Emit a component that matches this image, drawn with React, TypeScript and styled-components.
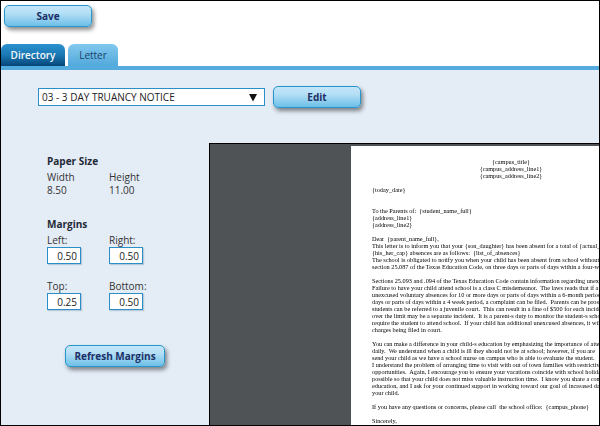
import React from 'react';
import styled, { createGlobalStyle } from 'styled-components';

const GlobalStyle = createGlobalStyle`
  html, body {
    margin: 0;
    padding: 0;
    overflow: hidden;
    background: #ffffff;
  }
  * {
    box-sizing: border-box;
  }
`;

const Frame = styled.div`
  display: flex;
  flex-direction: column;
  width: 600px;
  height: 426px;
  border: 1px solid #000000;
  font-family: 'Open Sans', sans-serif;
  font-size: 10px;
  color: #2b2b2b;
  overflow: hidden;
`;

const TopBar = styled.div`
  padding: 4px 0 17px 3px;
`;

const Button = styled.button<{ $width: number }>`
  display: block;
  width: ${(p) => p.$width}px;
  height: 22px;
  padding: 0;
  border: 1px solid #2696cd;
  border-radius: 5px;
  background: linear-gradient(#c3e5f8, #b5dff6 35%, #6dbfe7);
  box-shadow: 2px 3px 4px rgba(0, 0, 0, 0.45);
  font-family: 'Open Sans', sans-serif;
  font-size: 10px;
  font-weight: 700;
  color: #1c2f66;
`;

const Tabs = styled.div`
  display: flex;
  gap: 3px;
  height: 22px;
`;

const Tab = styled.div<{ $active?: boolean; $width: number }>`
  display: flex;
  align-items: center;
  justify-content: center;
  width: ${(p) => p.$width}px;
  border-radius: 6px 6px 0 0;
  font-size: 10px;
  background: ${(p) =>
    p.$active
      ? 'linear-gradient(#2b92cf, #1b78b3 50%, #05467a)'
      : 'linear-gradient(#82c8ee, #52a9dc)'};
  color: ${(p) => (p.$active ? '#f2f7fb' : '#1a4269')};
  font-weight: ${(p) => (p.$active ? 600 : 400)};
`;

const Panel = styled.div`
  display: flex;
  flex: 1;
  flex-direction: column;
  min-height: 0;
  border-top: 4px solid #54abdd;
  background: #e4ecf6;
`;

const Toolbar = styled.div`
  display: flex;
  align-items: center;
  gap: 8px;
  padding: 16px 0 0 37px;
  margin-bottom: 35px;
`;

const Select = styled.div`
  display: flex;
  align-items: center;
  justify-content: space-between;
  width: 227px;
  height: 18px;
  padding: 0 6px 0 3px;
  border: 1px solid #2a8fc6;
  background: #ffffff;
  font-size: 10px;
  color: #222222;
`;

const Content = styled.div`
  display: flex;
  flex: 1;
  min-height: 0;
`;

const Sidebar = styled.div`
  width: 208px;
  flex-shrink: 0;
  padding: 11px 0 0 46px;
`;

const Heading = styled.div`
  font-size: 10px;
  line-height: 14px;
  font-weight: 700;
  color: #1f2a36;
`;

const FieldGrid = styled.div<{ $rowGap: number }>`
  display: grid;
  grid-template-columns: 62px 62px;
  row-gap: ${(p) => p.$rowGap}px;
`;

const SizeGrid = styled(FieldGrid)`
  margin: 3px 0 20px;
`;

const MarginGrid = styled(FieldGrid)`
  margin-top: 3px;
`;

const Label = styled.div`
  font-size: 10px;
  line-height: 13px;
  color: #333333;
  white-space: nowrap;
`;

const NumberInput = styled.input`
  display: block;
  width: 34px;
  height: 17px;
  padding: 0 3px 0 0;
  border: 1px solid #2a8fc6;
  background: #ffffff;
  box-shadow: 1px 1px 1px rgba(90, 120, 150, 0.3);
  text-align: right;
  font-family: 'Open Sans', sans-serif;
  font-size: 10px;
  color: #222222;
`;

const RefreshRow = styled.div`
  margin: 35px 0 0 18px;
`;

const Preview = styled.div`
  flex: 1;
  min-width: 0;
  padding: 2px 0 0 141px;
  border-top: 1px solid #000000;
  border-left: 1px solid #000000;
  background: #4f5355;
  overflow: hidden;
`;

const Page = styled.div`
  width: 320px;
  height: 400px;
  padding: 12px 0 0 21px;
  background: #ffffff;
  font-family: 'Liberation Serif', serif;
  font-size: 6.25px;
  line-height: 7px;
  color: #000000;
  filter: blur(0.3px);
`;

const DocHeader = styled.div`
  width: 278px;
  text-align: center;
`;

const DocLine = styled.div`
  height: 7px;
  white-space: pre;
`;

const headerLines = ['{campus_title}', '{campus_address_line1}', '{campus_address_line2}'];

const bodyLines = [
  '',
  '{today_date}',
  '',
  '',
  'To the Parents of:  {student_name_full}',
  '{address_line1}',
  '{address_line2}',
  '',
  'Dear  {parent_name_full},',
  'This letter is to inform you that your {son_daughter} has been absent for a total of {actual_absences}',
  '{his_her_cap} absences are as follows:  {list_of_absences}',
  'The school is obligated to notify you when your child has been absent from school without',
  'section 25.087 of the Texas Education Code, on three days or parts of days within a four-week',
  '',
  'Sections 25.093 and .094 of the Texas Education Code contain information regarding unexcused',
  'Failure to have your child attend school is a class C misdemeanor.  The laws reads that if a',
  'unexcused voluntary absences for 10 or more days or parts of days within a 6-month period',
  'days or parts of days within a 4 week period, a complaint can be filed.  Parents can be prosecuted',
  'students can be referred to a juvenile court.  This can result in a fine of $500 for each incident',
  'over the limit may be a separate incident.  It is a parent-s duty to monitor the student-s school',
  'require the student to attend school.  If your child has additional unexcused absences, it will',
  'charges being filed in court.',
  '',
  'You can make a difference in your child-s education by emphasizing the importance of attending',
  'daily.  We understand when a child is ill they should not be at school; however, if you are',
  'send your child as we have a school nurse on campus who is able to evaluate the student.',
  'I understand the problem of arranging time to visit with out of town families with restrictive',
  'opportunities.  Again, I encourage you to ensure your vacations coincide with school holidays',
  'possible so that your child does not miss valuable instruction time.  I know you share a common',
  'education, and I ask for your continued support in working toward our goal of increased daily',
  'your child.',
  '',
  'If you have any questions or concerns, please call  the school office:  {campus_phone}',
  '',
  'Sincerely,',
];

const DropArrow = () => (
  <svg width="10" height="9" viewBox="0 0 10 9">
    <path d="M1 1h8L5 8.5z" fill="#111111" />
  </svg>
);

export default function App() {
  return (
    <>
      <GlobalStyle />
      <Frame>
        <TopBar>
          <Button $width={88}>Save</Button>
        </TopBar>
        <Tabs>
          <Tab $active $width={64}>Directory</Tab>
          <Tab $width={50}>Letter</Tab>
        </Tabs>
        <Panel>
          <Toolbar>
            <Select>
              03 - 3 DAY TRUANCY NOTICE
              <DropArrow />
            </Select>
            <Button $width={88}>Edit</Button>
          </Toolbar>
          <Content>
            <Sidebar>
              <Heading>Paper Size</Heading>
              <SizeGrid $rowGap={0}>
                <Label>Width</Label>
                <Label>Height</Label>
                <Label>8.50</Label>
                <Label>11.00</Label>
              </SizeGrid>
              <Heading>Margins</Heading>
              <MarginGrid $rowGap={16}>
                <div>
                  <Label>Left:</Label>
                  <NumberInput defaultValue="0.50" />
                </div>
                <div>
                  <Label>Right:</Label>
                  <NumberInput defaultValue="0.50" />
                </div>
                <div>
                  <Label>Top:</Label>
                  <NumberInput defaultValue="0.25" />
                </div>
                <div>
                  <Label>Bottom:</Label>
                  <NumberInput defaultValue="0.50" />
                </div>
              </MarginGrid>
              <RefreshRow>
                <Button $width={100}>Refresh Margins</Button>
              </RefreshRow>
            </Sidebar>
            <Preview>
              <Page>
                <DocHeader>
                  {headerLines.map((line) => (
                    <DocLine key={line}>{line}</DocLine>
                  ))}
                </DocHeader>
                {bodyLines.map((line, i) => (
                  <DocLine key={i}>{line}</DocLine>
                ))}
              </Page>
            </Preview>
          </Content>
        </Panel>
      </Frame>
    </>
  );
}
